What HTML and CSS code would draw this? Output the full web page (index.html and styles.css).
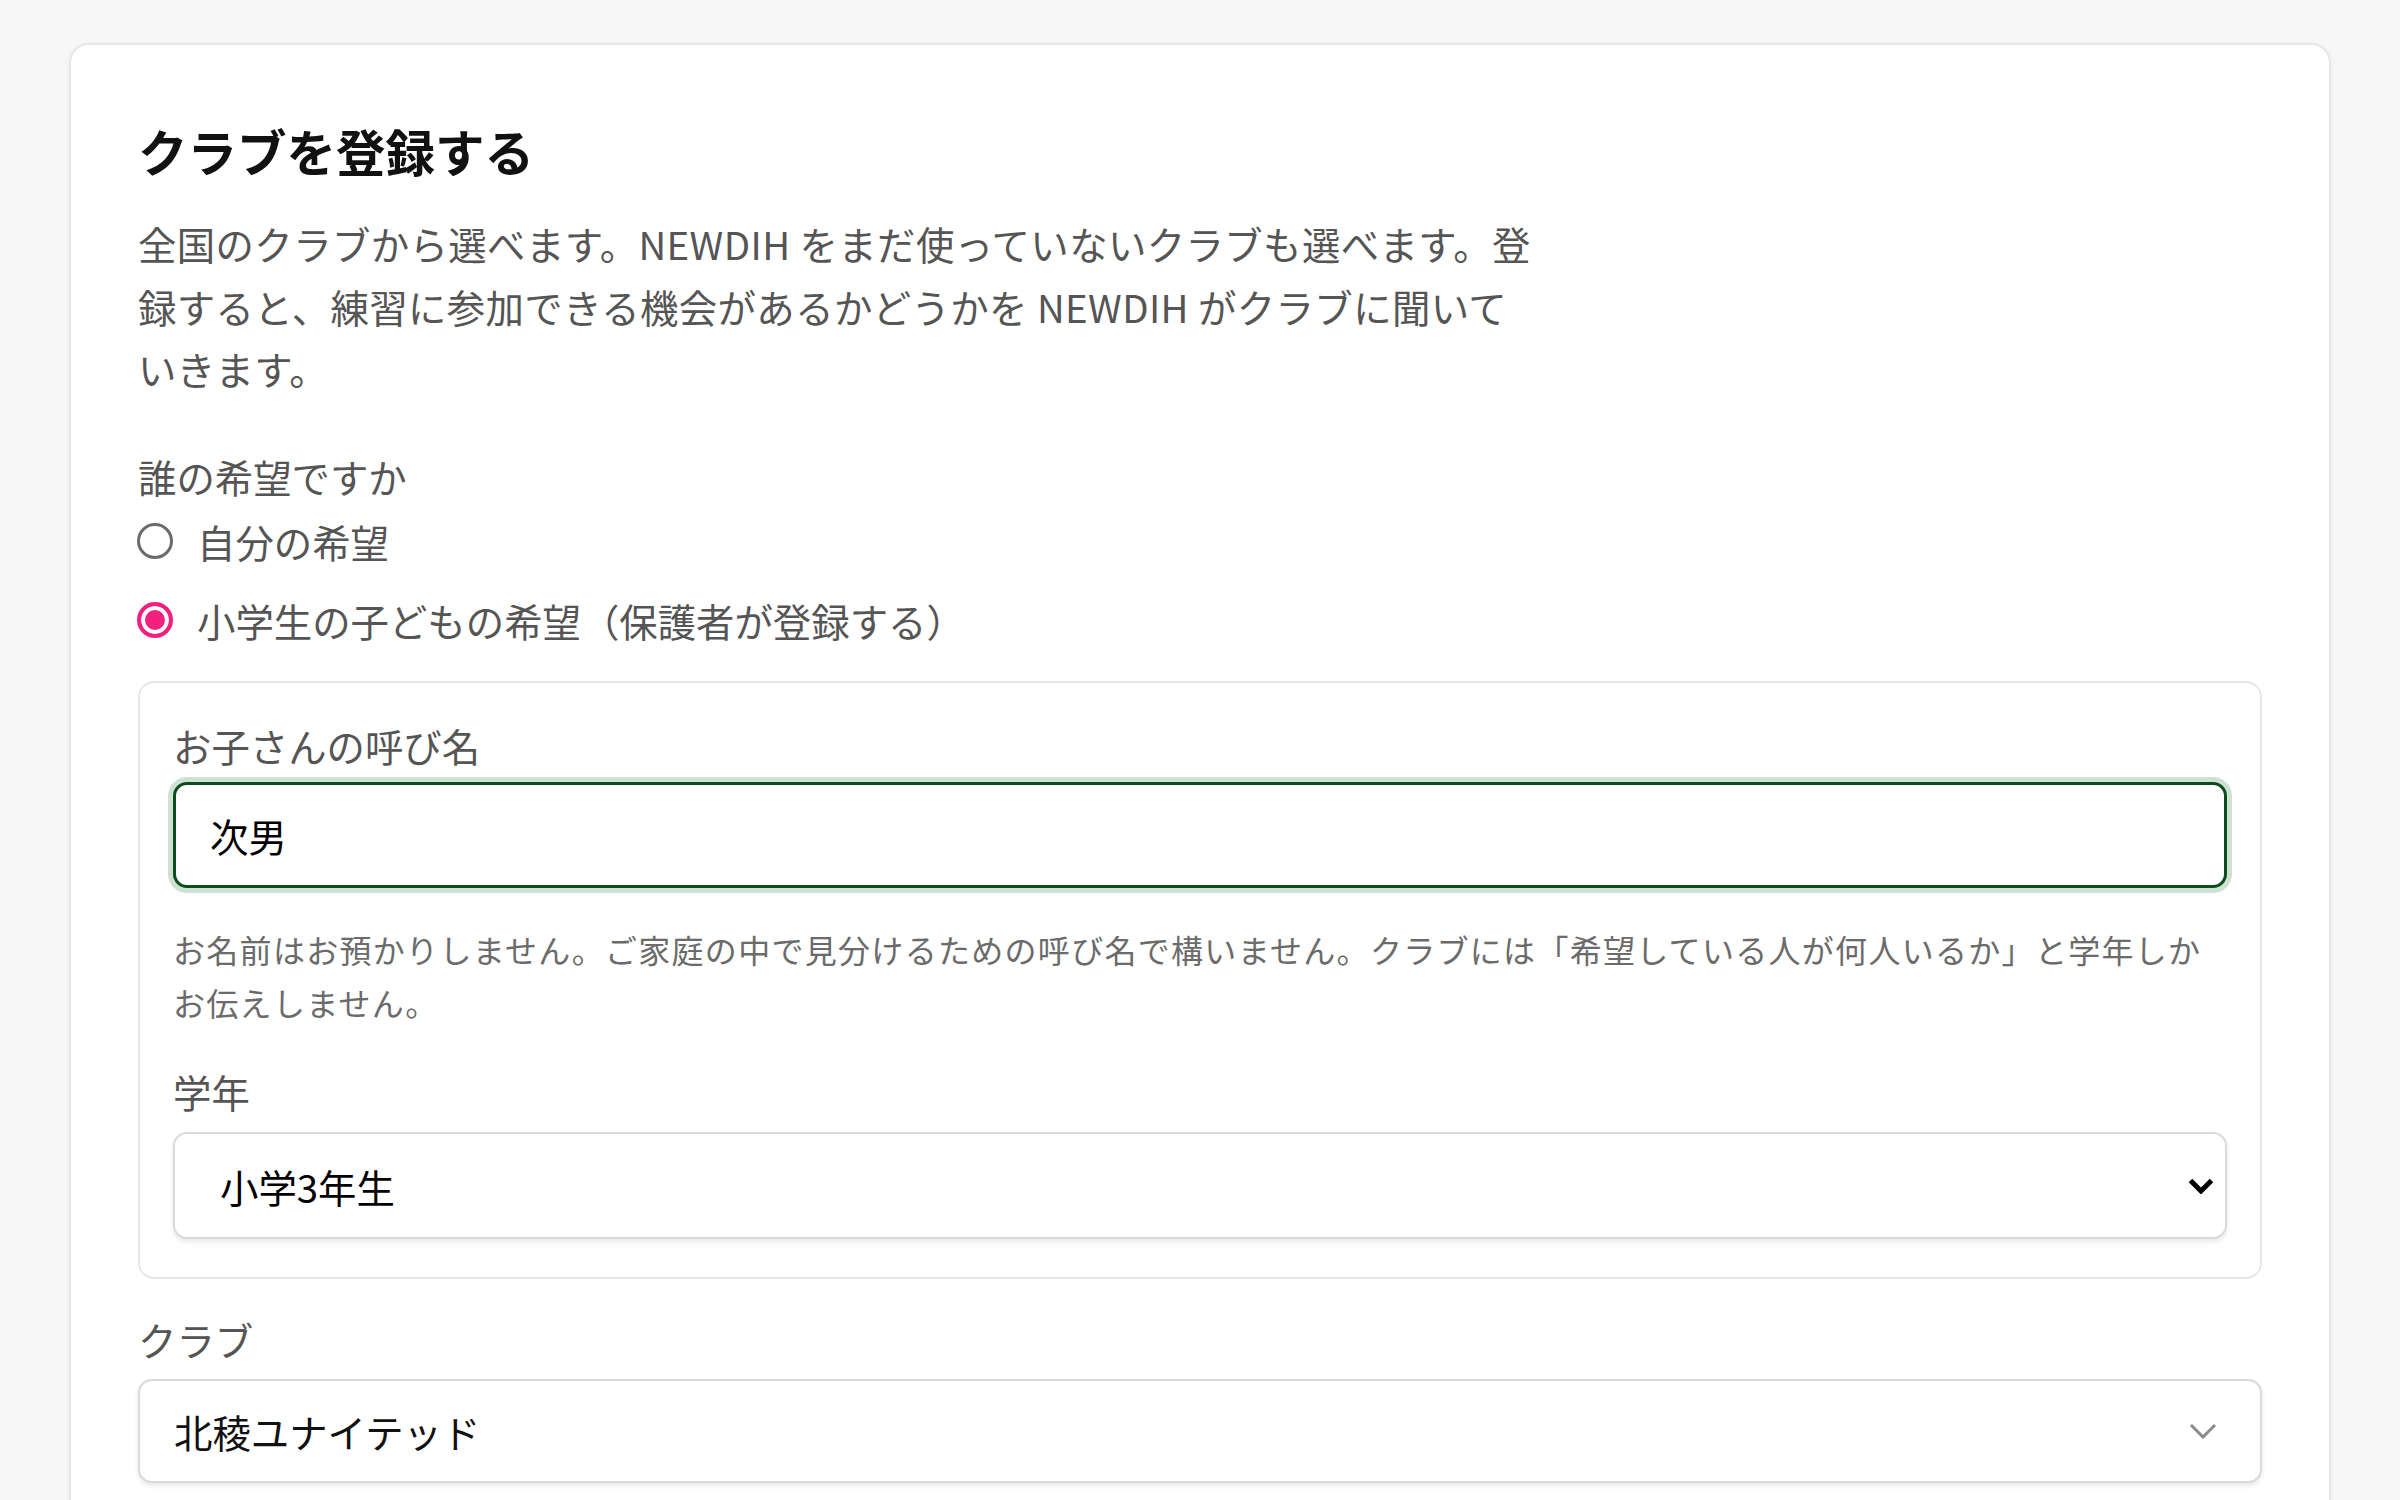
FILE: index.html
```html
<!DOCTYPE html>
<html lang="ja">
<head>
<meta charset="utf-8">
<title>クラブを登録する</title>
<link rel="stylesheet" href="styles.css">
</head>
<body>
<main class="page">
  <section class="card">
    <h1 class="title">クラブを登録する</h1>
    <p class="lead">全国のクラブから選べます。NEWDIH をまだ使っていないクラブも選べます。登録すると、練習に参加できる機会があるかどうかを NEWDIH がクラブに聞いていきます。</p>

    <div class="group">
      <div class="group-label">誰の希望ですか</div>
      <div class="radios">
        <label class="radio"><input type="radio" name="who" class="radio-input"><span>自分の希望</span></label>
        <label class="radio"><input type="radio" name="who" class="radio-input" checked><span>小学生の子どもの希望（保護者が登録する）</span></label>
      </div>
    </div>

    <div class="child-box">
      <label class="field-label" for="nick">お子さんの呼び名</label>
      <input id="nick" class="text-input" type="text" value="次男">
      <p class="help">お名前はお預かりしません。ご家庭の中で見分けるための呼び名で構いません。クラブには「希望している人が何人いるか」と学年しかお伝えしません。</p>
      <div class="field-label label-grade">学年</div>
      <div class="select select-grade">
        <span class="select-value">小学3年生</span>
        <svg class="chev chev-bold" width="26" height="16" viewBox="0 0 26 16"><path d="M2.5 2.5 L13 13 L23.5 2.5" fill="none" stroke="#000" stroke-width="5"/></svg>
      </div>
    </div>

    <div class="field-label label-club">クラブ</div>
    <div class="select select-club">
      <span class="select-value">北稜ユナイテッド</span>
      <svg class="chev chev-light" width="28" height="16" viewBox="0 0 28 16"><path d="M2 2 L14 14 L26 2" fill="none" stroke="#8a8a8a" stroke-width="3"/></svg>
    </div>
  </section>
</main>
</body>
</html>
```

FILE: styles.css
```css
* { box-sizing: border-box; }

html, body {
  margin: 0;
  padding: 0;
  background: #f7f7f7;
  font-family: "Noto Sans CJK JP", "Noto Sans", sans-serif;
  color: #555;
}

.page {
  padding: 43px 69px 0;
}

.card {
  background: #fff;
  border: 2px solid #e7e7e7;
  border-radius: 20px;
  box-shadow: 0 1px 5px rgba(0, 0, 0, 0.05);
  padding: 72px 67px 80px;
}

.title {
  margin: 0;
  font-size: 49.5px;
  line-height: 67px;
  font-weight: 700;
  color: #111;
}

.lead {
  margin: 28px 0 0;
  max-width: 1400px;
  font-size: 38.4px;
  letter-spacing: 0.4px;
  line-height: 62.5px;
  color: #555;
}

.group {
  margin-top: 45px;
}

.group-label {
  font-size: 38.4px;
  line-height: 62px;
}

.radios {
  display: flex;
  flex-direction: column;
  gap: 17px;
  margin-top: 3px;
}

.radio {
  display: flex;
  align-items: center;
  gap: 24px;
  height: 62px;
  font-size: 38.4px;
  color: #555;
}

.radio-input {
  appearance: none;
  -webkit-appearance: none;
  margin: 0 0 0 -1px;
  width: 36px;
  height: 36px;
  border-radius: 50%;
  border: 3px solid #6b6b6b;
  background: #fff;
  flex: none;
}

.radio-input:checked {
  border: 4px solid #f2207f;
  box-shadow: inset 0 0 0 4px #fff;
  background: #f2207f;
}

.child-box {
  margin-top: 30px;
  border: 2px solid #e6e6e6;
  border-radius: 16px;
  padding: 34px 33px 38px;
  display: flex;
  flex-direction: column;
}

.field-label {
  display: block;
  font-size: 38.4px;
  line-height: 57px;
  margin-bottom: 8px;
  color: #555;
}

.text-input {
  display: block;
  width: 100%;
  height: 106px;
  border: 3px solid #0b4d1c;
  border-radius: 14px;
  box-shadow: 0 0 0 5px #cfe1d3;
  padding: 0 34px;
  font-family: inherit;
  font-size: 38.4px;
  color: #000;
  background: #fff;
  outline: none;
}

.help {
  margin: 35px 0 0;
  font-size: 32px;
  letter-spacing: 1.3px;
  line-height: 53px;
  color: #6b6b6b;
}

.label-grade {
  margin-top: 34px;
  margin-bottom: 12px;
}

.select {
  display: flex;
  align-items: center;
  justify-content: space-between;
  background: #fff;
  border: 2px solid #dadada;
  border-radius: 14px;
  box-shadow: 0 3px 5px rgba(0, 0, 0, 0.09);
  font-size: 38.4px;
  color: #000;
}

.select-grade {
  height: 107px;
  padding: 2px 11px 0 45px;
}

.label-club {
  margin-top: 32px;
  margin-bottom: 11px;
}

.select-club {
  height: 104px;
  padding: 0 43px 0 34px;
  color: #111;
}

.chev { flex: none; }
```
